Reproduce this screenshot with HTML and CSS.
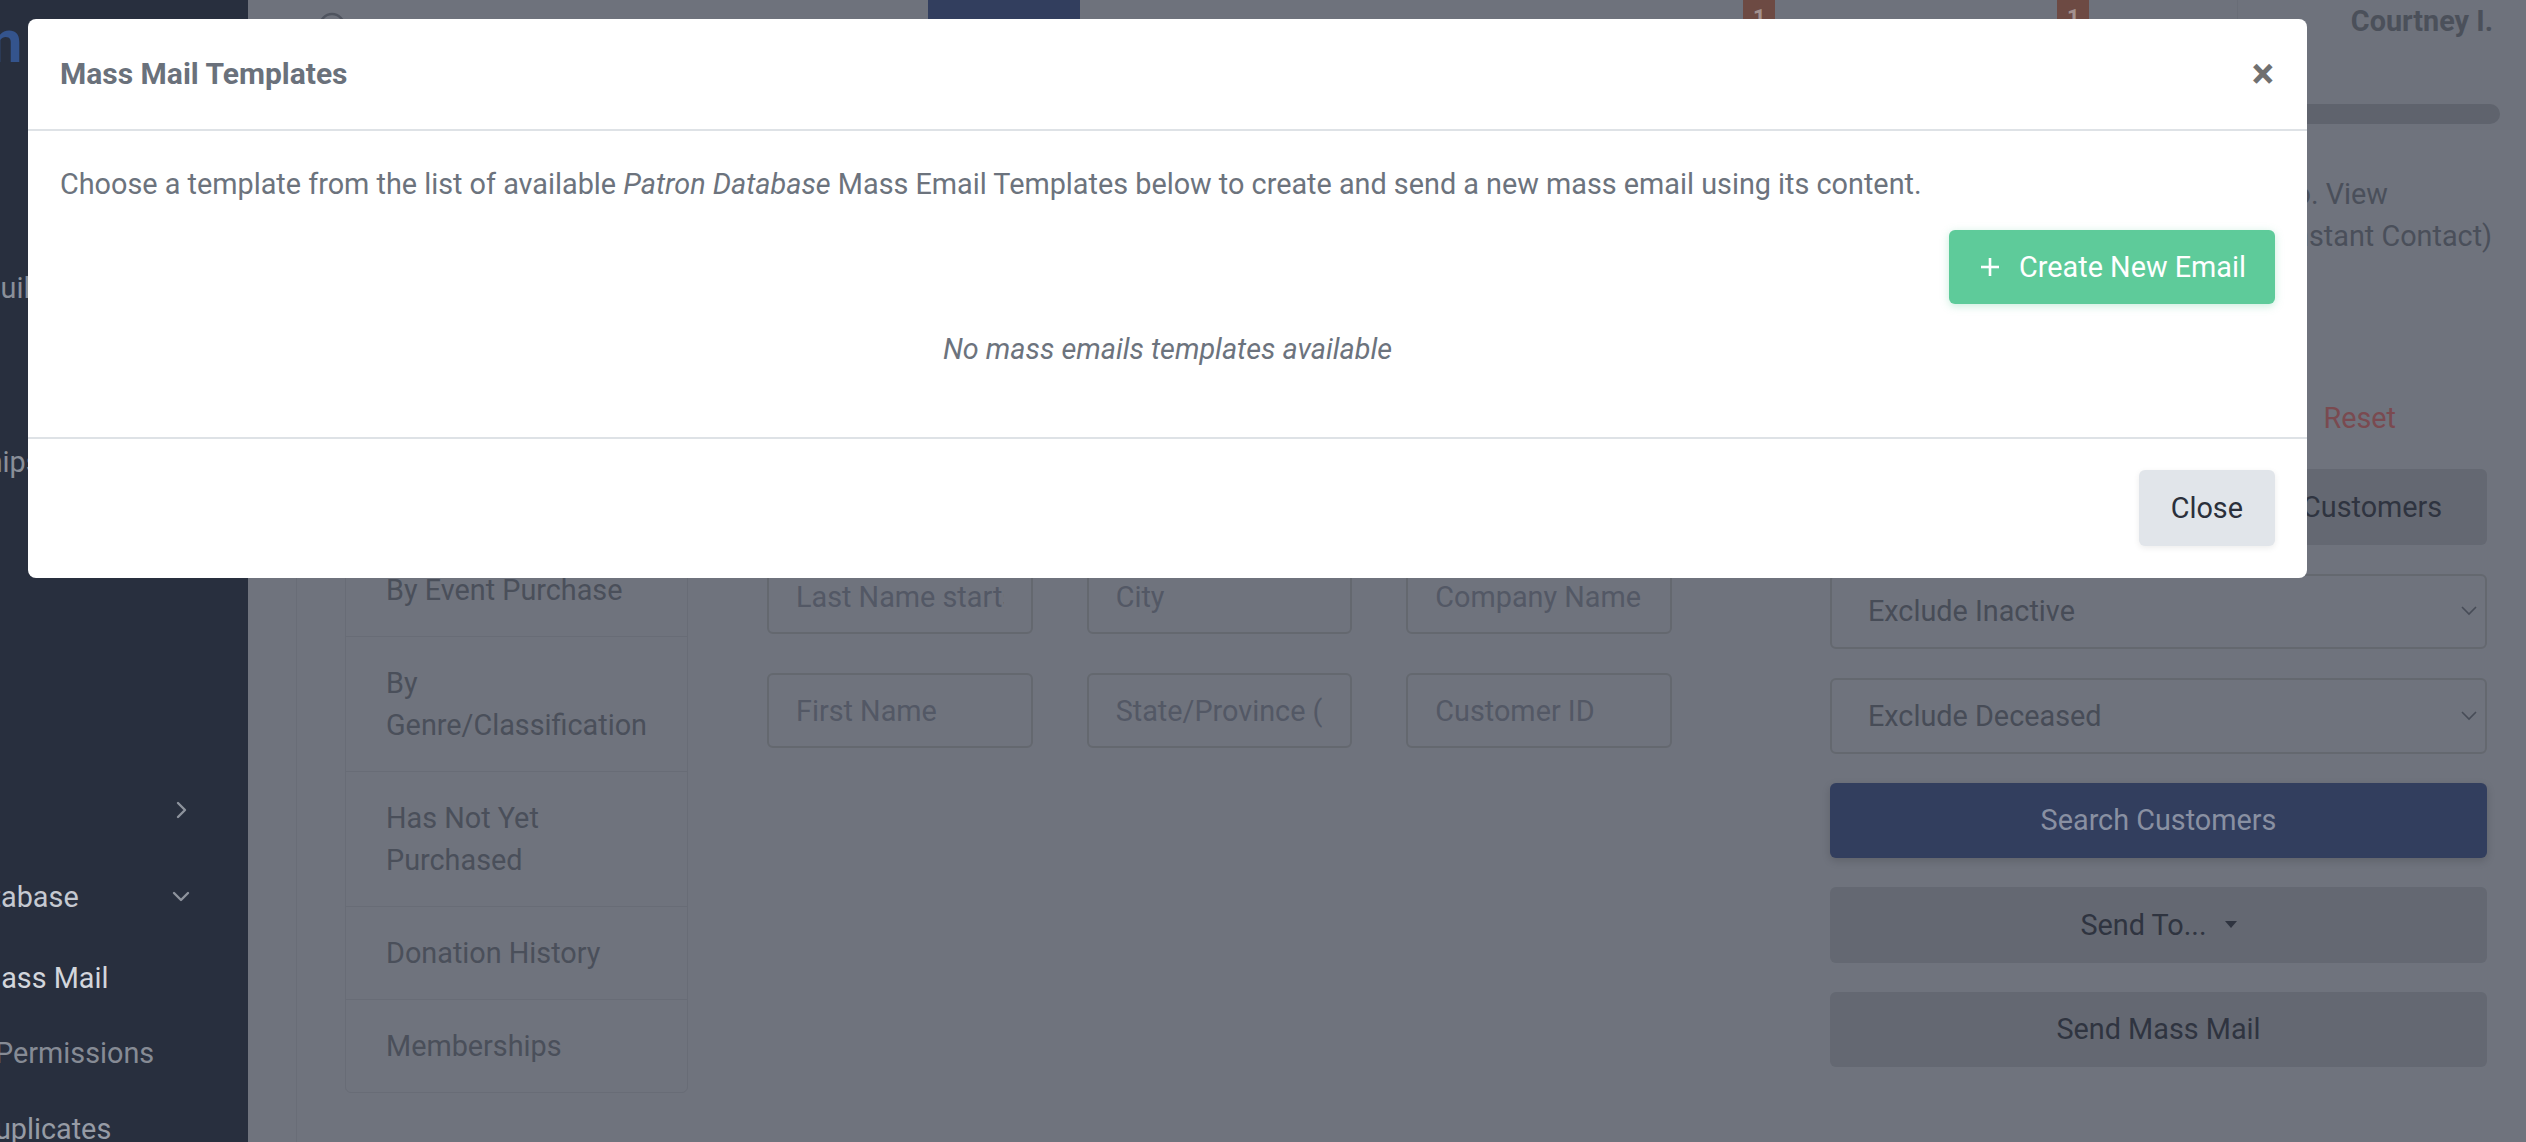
FILE: index.html
```html
<!DOCTYPE html>
<html lang="en">
<head>
<meta charset="utf-8">
<title>Patron Database – Mass Mail</title>
<link rel="stylesheet" href="styles.css">
</head>
<body>
<div class="app">
  <aside class="sidebar">
    <div class="sidebar-inner">
      <div class="brand"><span class="brand-name">Patron</span></div>
      <nav class="side-nav">
        <a class="side-item">Home</a>
        <a class="side-item">Package Builder</a>
        <a class="side-item">Events</a>
        <a class="side-item">Memberships</a>
        <a class="side-item">Orders</a>
        <a class="side-item">Reports</a>
        <a class="side-item">Venues</a>
        <a class="side-item">Tools
          <svg class="chev" viewBox="0 0 18 18"><polyline points="6,2 13,9 6,16"/></svg>
        </a>
        <a class="side-item open">Patron Database
          <svg class="chev" viewBox="0 0 18 18"><polyline points="2,5 9,12 16,5"/></svg>
        </a>
        <a class="side-sub active">Mass Mail</a>
        <a class="side-sub flush">Permissions</a>
        <a class="side-sub light">Duplicates</a>
      </nav>
    </div>
  </aside>

  <main class="main">
    <header class="topbar">
      <div class="tb-row">
        <svg class="tb-search" viewBox="0 0 30 30"><circle cx="14" cy="14" r="12"/><line x1="23" y1="23" x2="29" y2="29"/></svg>
        <a class="tb-tab">Patrons</a>
        <a class="tb-link first">Box Office<span class="badge">1</span></a>
        <a class="tb-link second">Messages<span class="badge">1</span></a>
        <div class="tb-user">Courtney I.</div>
      </div>
      <div class="tb-scroll"><div class="tb-thumb"></div></div>
    </header>

    <section class="content">
      <p class="intro">Use the filter below to search for customers in your Patron Database, then mail customers found by selecting Send Mass Mail or export them with Send To. View<br>all past mailings, open rates and unsubscribes from the Mass Mail History pages, which is kept in sync with your connected email marketing account (Constant Contact)<br>Customers marked as inactive or deceased are excluded by default.</p>

      <div class="search-layout">
        <ul class="filter-list">
          <li>All Customers</li>
          <li>By Purchase Date</li>
          <li>By Event Purchase</li>
          <li>By Genre/Classification</li>
          <li>Has Not Yet Purchased</li>
          <li>Donation History</li>
          <li>Memberships</li>
        </ul>

        <div class="fields">
          <input class="field" placeholder="Email Address">
          <input class="field" placeholder="Phone">
          <input class="field" placeholder="Tags">
          <input class="field" placeholder="Full Name">
          <input class="field" placeholder="Address">
          <input class="field" placeholder="Postal Code">
          <input class="field" placeholder="Last Name starts with">
          <input class="field" placeholder="City">
          <input class="field" placeholder="Company Name">
          <input class="field" placeholder="First Name">
          <input class="field" placeholder="State/Province (abbr.)">
          <input class="field" placeholder="Customer ID">
        </div>

        <div class="actions">
          <div class="reset-row"><a class="reset-link">Reset</a></div>
          <div class="btn-row">
            <button class="btn btn-muted">Add Customer</button>
            <button class="btn btn-muted">Export Customers</button>
          </div>
          <div class="select">Exclude Inactive
            <svg class="select-chev" viewBox="0 0 16 10"><polyline points="1,1 8,8 15,1"/></svg>
          </div>
          <div class="select">Exclude Deceased
            <svg class="select-chev" viewBox="0 0 16 10"><polyline points="1,1 8,8 15,1"/></svg>
          </div>
          <button class="btn btn-primary">Search Customers</button>
          <button class="btn btn-muted">Send To...<span class="caret"></span></button>
          <button class="btn btn-muted">Send Mass Mail</button>
        </div>
      </div>
    </section>
  </main>
</div>

<div class="modal" role="dialog" aria-labelledby="modal-title">
  <div class="modal-header">
    <h5 class="modal-title" id="modal-title">Mass Mail Templates</h5>
    <button class="modal-close" aria-label="Close">×</button>
  </div>
  <div class="modal-body">
    <p class="modal-intro">Choose a template from the list of available <em>Patron Database</em> Mass Email Templates below to create and send a new mass email using its content.</p>
    <div class="modal-actions">
      <button class="btn-create">
        <svg class="plus" viewBox="0 0 20 20"><line x1="10" y1="1" x2="10" y2="19"/><line x1="1" y1="10" x2="19" y2="10"/></svg>
        Create New Email
      </button>
    </div>
    <p class="modal-empty">No mass emails templates available</p>
  </div>
  <div class="modal-footer">
    <button class="btn-close">Close</button>
  </div>
</div>
</body>
</html>
```

FILE: styles.css
```css
* { box-sizing: border-box; }

html, body {
  margin: 0;
  padding: 0;
}

body {
  width: 2526px;
  height: 1142px;
  overflow: hidden;
  font-family: Roboto, "Liberation Sans", Arial, sans-serif;
  font-size: 28.8px;
  line-height: 42px;
  background: #6f737d;
  color: #4a4f5a;
}

.app {
  display: flex;
  height: 1142px;
}

/* ---------- Sidebar ---------- */
.sidebar {
  width: 248px;
  flex: none;
  background: #282f3e;
  overflow: hidden;
}

.sidebar-inner {
  width: 408px;
  margin-left: -160px;
}

.brand {
  height: 157px;
  padding: 12px 0 0 8px;
}

.brand-name {
  font-size: 60px;
  line-height: 60px;
  font-weight: 700;
  color: #34548d;
  letter-spacing: -1px;
}

.side-nav {
  display: flex;
  flex-direction: column;
}

.side-item {
  height: 87px;
  display: flex;
  align-items: center;
  justify-content: space-between;
  padding: 0 58px 0 25px;
  color: #8a8f99;
  white-space: nowrap;
}

.side-item.open { color: #c5c9d1; }

.side-sub {
  height: 75.5px;
  display: flex;
  align-items: center;
  padding-left: 136px;
  color: #868b95;
  white-space: nowrap;
}

.side-sub.active { color: #d3d6dc; }
.side-sub.flush { padding-left: 155px; }
.side-sub.light { color: #969ba5; }

.chev {
  width: 18px;
  height: 18px;
  fill: none;
  stroke: #8e939d;
  stroke-width: 2.4;
  stroke-linecap: round;
  stroke-linejoin: round;
}

/* ---------- Main ---------- */
.main {
  flex: 1;
  min-width: 0;
  display: flex;
  flex-direction: column;
}

.topbar {
  height: 130px;
  flex: none;
  background: #6e727c;
}

.tb-row {
  height: 100px;
  display: flex;
  align-items: flex-start;
}

.tb-search {
  width: 30px;
  height: 30px;
  margin: 12px 0 0 70px;
  fill: none;
  stroke: #4f545f;
  stroke-width: 2.5;
}

.tb-tab {
  width: 152px;
  height: 100px;
  margin-left: 580px;
  background: #323e5e;
  color: #8a91a3;
  display: flex;
  align-items: center;
  justify-content: center;
}

.tb-link {
  display: flex;
  align-items: flex-start;
  color: #4a4f5a;
  white-space: nowrap;
  padding-top: 26px;
}

.tb-link.first { margin-left: 533px; }
.tb-link.second { margin-left: 150px; }

.badge {
  width: 32px;
  height: 44px;
  margin-top: -30px;
  background: #6d4a43;
  color: #a3918f;
  font-size: 22px;
  font-weight: 700;
  line-height: 44px;
  text-align: center;
  border-radius: 0 0 4px 4px;
}

.tb-user {
  margin-left: auto;
  width: 289px;
  height: 100px;
  border-left: 1px solid #696d77;
  text-align: right;
  padding-right: 33px;
  font-weight: 700;
  color: #4b505a;
}

.tb-user::first-line { line-height: 30px; }

.tb-scroll {
  height: 20px;
  margin-top: 4px;
  display: flex;
  justify-content: flex-end;
  padding-right: 26px;
}

.tb-thumb {
  width: 1150px;
  height: 20px;
  border-radius: 10px;
  background: #5f636d;
}

/* ---------- Content ---------- */
.content {
  flex: 1;
  margin-left: 48px;
  border-left: 1px solid #696d77;
  padding: 43px 31px 0 48px;
}

.intro {
  margin: 0;
  white-space: nowrap;
  color: #4a4f5a;
}

.search-layout {
  display: flex;
  align-items: flex-start;
  margin-top: 32px;
}

.filter-list {
  width: 343px;
  flex: none;
  margin: 26px 0 0;
  padding: 0;
  list-style: none;
  border: 1px solid #686c76;
  border-radius: 6px;
}

.filter-list li {
  padding: 25px 30px 25px 40px;
  border-top: 1px solid #686c76;
  color: #4a4f5a;
}

.filter-list li:first-child { border-top: 0; }

.fields {
  width: 905px;
  flex: none;
  margin-left: 79px;
  display: grid;
  grid-template-columns: repeat(3, 1fr);
  column-gap: 54px;
  row-gap: 39px;
}

.field {
  height: 75px;
  width: 100%;
  border: 2px solid #64686f;
  border-radius: 6px;
  background: transparent;
  padding: 0 27px;
  font: 400 28.8px Roboto, "Liberation Sans", Arial, sans-serif;
  color: #474c57;
  outline: none;
}

.field::placeholder { color: #535865; opacity: 1; }

.actions {
  width: 657px;
  flex: none;
  margin-left: 158px;
  padding-top: 66px;
  display: flex;
  flex-direction: column;
  gap: 29px;
}

.reset-row {
  display: flex;
  justify-content: flex-end;
  padding-right: 91px;
  margin-bottom: 1px;
}

.reset-link { color: #7a4a50; }

.btn-row {
  display: flex;
  gap: 17px;
}

.btn-row .btn { flex: 1; }

.btn {
  height: 75.5px;
  border: 0;
  border-radius: 6px;
  font: 400 28.8px Roboto, "Liberation Sans", Arial, sans-serif;
  display: flex;
  align-items: center;
  justify-content: center;
  padding: 0 20px;
}

.btn-muted { background: #646872; color: #2f3440; }

.btn-primary {
  background: #323e5e;
  color: #8990a2;
  box-shadow: 0 3px 8px rgba(0, 0, 0, 0.15);
}

.caret {
  width: 0;
  height: 0;
  margin-left: 18px;
  border-top: 7px solid #2f3440;
  border-left: 6px solid transparent;
  border-right: 6px solid transparent;
}

.select {
  height: 75.5px;
  border: 2px solid #64686f;
  border-radius: 6px;
  display: flex;
  align-items: center;
  justify-content: space-between;
  padding: 0 8px 0 36px;
  color: #474c57;
}

.select-chev {
  width: 16px;
  height: 10px;
  fill: none;
  stroke: #474c57;
  stroke-width: 1.6;
}

/* ---------- Modal ---------- */
.modal {
  position: fixed;
  left: 28px;
  top: 19px;
  width: 2279px;
  background: #ffffff;
  border-radius: 8px;
  color: #6c737d;
}

.modal-header {
  height: 112px;
  display: flex;
  align-items: center;
  justify-content: space-between;
  padding: 0 33px 0 32px;
  border-bottom: 2px solid #dee2e6;
}

.modal-title {
  margin: 0;
  font-size: 30px;
  font-weight: 700;
  line-height: 42px;
  color: #6a717b;
}

.modal-close {
  border: 0;
  background: none;
  padding: 0;
  font: 700 42px/1 Roboto, "Liberation Sans", Arial, sans-serif;
  color: #707070;
}

.modal-body {
  padding: 32px;
}

.modal-intro {
  margin: 0;
}

.modal-actions {
  display: flex;
  justify-content: flex-end;
  margin-top: 25px;
}

.btn-create {
  height: 74px;
  display: inline-flex;
  align-items: center;
  gap: 19px;
  padding: 0 29px 0 31px;
  background: #5ecb9a;
  color: #ffffff;
  border: 0;
  border-radius: 6px;
  font: 400 28.8px Roboto, "Liberation Sans", Arial, sans-serif;
  box-shadow: 0 2px 8px rgba(94, 203, 154, 0.35);
}

.plus {
  width: 20px;
  height: 20px;
  stroke: #ffffff;
  stroke-width: 2.6;
}

.modal-empty {
  margin: 24px 0 35px;
  text-align: center;
  font-style: italic;
}

.modal-footer {
  border-top: 2px solid #dee2e6;
  padding: 31px 32px 32px;
  display: flex;
  justify-content: flex-end;
}

.btn-close {
  height: 76px;
  padding: 0 32px;
  background: #e1e5ea;
  color: #2b303b;
  border: 0;
  border-radius: 6px;
  font: 400 28.8px Roboto, "Liberation Sans", Arial, sans-serif;
  box-shadow: 0 2px 6px rgba(0, 0, 0, 0.08);
}
```
